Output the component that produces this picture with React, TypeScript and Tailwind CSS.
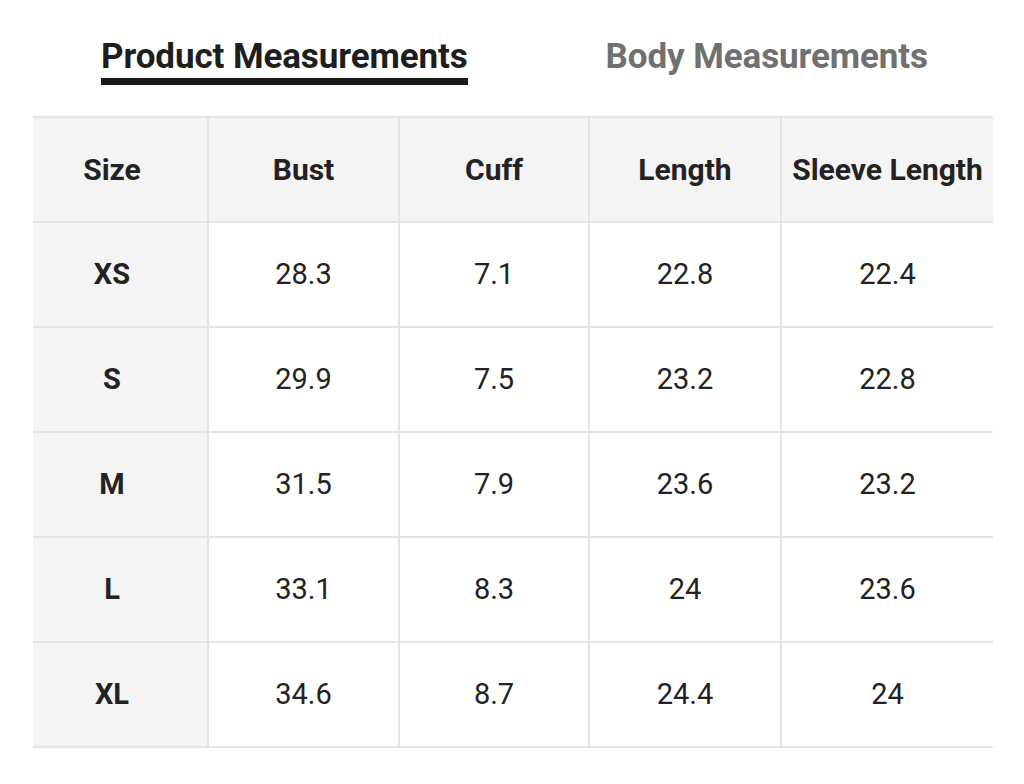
const headers = ["Size", "Bust", "Cuff", "Length", "Sleeve Length"];

const rows: string[][] = [
  ["XS", "28.3", "7.1", "22.8", "22.4"],
  ["S", "29.9", "7.5", "23.2", "22.8"],
  ["M", "31.5", "7.9", "23.6", "23.2"],
  ["L", "33.1", "8.3", "24", "23.6"],
  ["XL", "34.6", "8.7", "24.4", "24"],
];

const widths = ["w-[175px]", "w-[191px]", "w-[190px]", "w-[192px]", "w-[212px]"];

const App: React.FC = () => {
  return (
    <div className="w-[1024px] h-[784px] bg-white text-[#222] font-['Roboto',_'Liberation_Sans',_sans-serif]">
      <div className="flex items-start pt-[37px] pl-[101px] h-[116px]">
        <div className="flex flex-col">
          <span className="text-[35px] font-bold leading-[40px] tracking-[-0.1px] text-[#1e1e1e]">
            Product Measurements
          </span>
          <div className="mt-[1px] h-[7px] bg-[#1a1a1a]" />
        </div>
        <span className="ml-[138px] text-[35px] font-bold leading-[40px] tracking-[-0.1px] text-[#707070]">
          Body Measurements
        </span>
      </div>

      <table className="ml-[33px] table-fixed border-collapse w-[960px]">
        <thead>
          <tr className="h-[105px] bg-[#f4f4f4] border-y-2 border-[#e4e4e4]">
            {headers.map((h, i) => (
              <th
                key={h}
                className={`${widths[i]} text-[30px] font-bold text-center ${i > 0 ? "border-l-2 border-[#e4e4e4]" : "pr-[16px]"}`}
              >
                {h}
              </th>
            ))}
          </tr>
        </thead>
        <tbody>
          {rows.map((r) => (
            <tr key={r[0]} className="h-[105px] border-b-2 border-[#e4e4e4]">
              {r.map((v, i) => (
                <td
                  key={i}
                  className={
                    i === 0
                      ? "bg-[#f4f4f4] text-[29px] font-bold text-center pr-[16px]"
                      : "border-l-2 border-[#e4e4e4] text-[29px] text-center"
                  }
                >
                  {v}
                </td>
              ))}
            </tr>
          ))}
        </tbody>
      </table>
    </div>
  );
};

export default App;
